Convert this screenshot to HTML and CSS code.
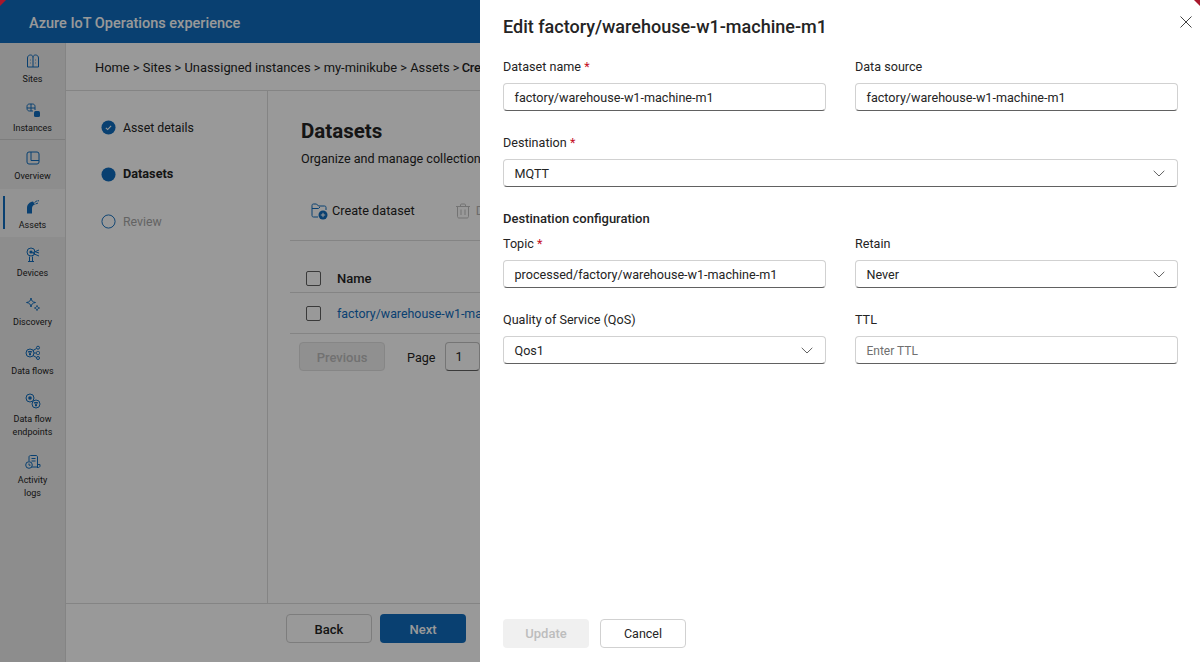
FILE: index.html
```html
<!DOCTYPE html>
<html lang="en">
<head>
<meta charset="utf-8">
<title>Azure IoT Operations experience</title>
<link rel="stylesheet" href="styles.css">
</head>
<body>
<div class="app">
  <header class="topbar">Azure IoT Operations experience</header>
  <div class="shell">
    <nav class="rail">
      <div class="rail-group">
        <a class="rail-item"><svg class="ri" viewBox="0 0 16 16"><path d="M2.500 14V5C2.500 3 4 2 5.500 2S8 3 8 4.500C8 3 9 2 10.500 2S13.500 3 13.500 5V14H2.500ZM8 4.500V14M5 7h.6M10.400 7h.6M5 10h.6M10.400 10h.6"/></svg><span>Sites</span></a>
        <a class="rail-item"><svg class="ri" viewBox="0 0 16 16"><path d="M8 9H4.500C3 9 2 8 2 6.500V4.500C2 3 3 2 4.500 2H7.500C9 2 10 3 10 4.500V8M2 6H10M6 2V9"/><rect class="fill" x="9" y="9" width="6" height="6" rx="1.500"/></svg><span>Instances</span></a>
      </div>
      <div class="rail-group">
        <a class="rail-item"><svg class="ri" viewBox="0 0 16 16"><rect x="2" y="2" width="12" height="12" rx="2"/><path d="M6 2V10.500H14"/></svg><span>Overview</span></a>
        <a class="rail-item active"><svg class="ri" viewBox="0 0 16 16"><path class="fill" d="M2 14.500V9C2 5.500 4.500 3 8 2.500L10 5.500C8 6 7 7.500 7 9.500V14.500Z"/><path d="M9.500 3.500 12 1.800M12.500 1.800H14M10.500 5 13 4"/></svg><span>Assets</span></a>
        <a class="rail-item"><svg class="ri" viewBox="0 0 16 16"><circle cx="6" cy="5" r="4"/><circle class="fill" cx="6" cy="5" r="1.600"/><path d="M4.500 14.500V9.500M7.500 14.500V9.500M3 14.500H9M7 6 14 3M8 6.500 14 9M11 5 14 6"/></svg><span>Devices</span></a>
        <a class="rail-item"><svg class="ri" viewBox="0 0 16 16"><path d="M6 2C6.500 5 7.500 6 10.500 6.500 7.500 7 6.500 8 6 11 5.500 8 4.500 7 1.500 6.500 4.500 6 5.500 5 6 2ZM12 9.500C12.300 11 13 11.700 14.500 12 13 12.300 12.300 13 12 14.500 11.700 13 11 12.300 9.500 12 11 11.700 11.700 11 12 9.500Z"/></svg><span>Discovery</span></a>
        <a class="rail-item"><svg class="ri" viewBox="0 0 16 16"><circle cx="5" cy="8" r="4"/><path d="M3.300 6.500H6.700L5.500 8.200V10H4.500V8.200ZM9 8H11M8 5.500 11.500 3.500M8 10.500 11.500 12.500"/><circle cx="13" cy="2.700" r="1.500"/><rect x="11.500" y="6.500" width="3" height="3" rx="1"/><circle cx="13" cy="13" r="1.500"/></svg><span>Data flows</span></a>
        <a class="rail-item tall"><svg class="ri" viewBox="0 0 16 16"><circle cx="5" cy="5" r="4"/><circle class="fill" cx="5" cy="5" r="1.800"/><circle cx="11" cy="11" r="4"/><path d="M9.300 9.500H12.700L11.500 11.200V13H10.500V11.200Z"/></svg><span>Data flow<br>endpoints</span></a>
        <a class="rail-item tall"><svg class="ri" viewBox="0 0 16 16"><path d="M4 7V3C4 2 4.800 1.500 5.500 1.500H11C12 1.500 12.500 2.200 12.500 3V13H6.500M12.500 10.500H15V12C15 13 14 13.500 13.200 13.500H12M6.500 4.500H10.500M6.500 7H10.500"/><circle cx="4" cy="11" r="3.300"/><path d="M4 9.500V11.200H5.500"/></svg><span>Activity<br>logs</span></a>
      </div>
    </nav>
    <main class="main">
      <div class="crumbs">Home &gt; Sites &gt; Unassigned instances &gt; my-minikube &gt; Assets &gt; <b>Cre</b></div>
      <div class="wizard">
        <ol class="steps">
          <li class="step"><svg class="dot" viewBox="0 0 16 16"><circle class="solid" cx="8" cy="8" r="7.500"/><path class="tick" d="M5.200 8.300 7.100 10.200 10.800 6.300"/></svg>Asset details</li>
          <li class="step current"><svg class="dot" viewBox="0 0 16 16"><circle class="solid" cx="8" cy="8" r="7.500"/></svg>Datasets</li>
          <li class="step todo"><svg class="dot" viewBox="0 0 16 16"><circle class="ring" cx="8" cy="8" r="7"/></svg>Review</li>
        </ol>
        <section class="content">
          <h1>Datasets</h1>
          <p class="lead">Organize and manage collection</p>
          <div class="toolbar">
            <span class="tool"><svg class="ti" viewBox="0 0 18 18"><path d="M8 15H3.500C2.500 15 2 14.400 2 13.500V3.500C2 2.600 2.500 2 3.500 2H6.500L8.500 4H14.500C15.500 4 16 4.600 16 5.500V8M2 6.500H8.500L10 5"/><circle class="fill" cx="13" cy="13" r="4.500"/><path class="plus" d="M13 10.800V15.200M10.800 13H15.200"/></svg>Create dataset</span>
            <span class="tool off"><svg class="ti" viewBox="0 0 18 18"><path d="M2 4.500H16M6.500 4.500V3C6.500 2.400 7 2 7.500 2H10.500C11 2 11.500 2.400 11.500 3V4.500M3.500 4.500V14.500C3.500 15.400 4.200 16 5 16H13C13.800 16 14.500 15.400 14.500 14.500V4.500M7 7.500V13M11 7.500V13"/></svg>D</span>
          </div>
          <div class="row head"><i class="check"></i><b>Name</b></div>
          <div class="row"><i class="check"></i><a class="link">factory/warehouse-w1-ma</a></div>
          <div class="pager"><span class="btn prev">Previous</span><span class="page-label">Page</span><span class="pagebox">1</span></div>
        </section>
      </div>
      <footer class="footer"><span class="btn back">Back</span><span class="btn next">Next</span></footer>
    </main>
  </div>
</div>
<div class="scrim"></div>
<aside class="panel">
  <button class="close" aria-label="Close"><svg viewBox="0 0 12 12"><path d="M.5.5 11.500 11.500M11.500.5 .5 11.500"/></svg></button>
  <h2>Edit factory/warehouse-w1-machine-m1</h2>
  <div class="form">
    <div class="field"><label>Dataset name <em>*</em></label><div class="input">factory/warehouse-w1-machine-m1</div></div>
    <div class="field"><label>Data source</label><div class="input">factory/warehouse-w1-machine-m1</div></div>
    <div class="field wide"><label>Destination <em>*</em></label><div class="input select">MQTT<svg class="chev" viewBox="0 0 12 7"><path d="M.7.8 6 6 11.300.8"/></svg></div></div>
    <h3 class="wide">Destination configuration</h3>
    <div class="field"><label>Topic <em>*</em></label><div class="input">processed/factory/warehouse-w1-machine-m1</div></div>
    <div class="field"><label>Retain</label><div class="input select">Never<svg class="chev" viewBox="0 0 12 7"><path d="M.7.8 6 6 11.300.8"/></svg></div></div>
    <div class="field"><label>Quality of Service (QoS)</label><div class="input select">Qos1<svg class="chev" viewBox="0 0 12 7"><path d="M.7.8 6 6 11.300.8"/></svg></div></div>
    <div class="field"><label>TTL</label><div class="input ph">Enter TTL</div></div>
  </div>
  <div class="actions"><span class="btn update">Update</span><span class="btn cancel">Cancel</span></div>
</aside>
<i class="corner left"></i><i class="corner right"></i>
</body>
</html>
```
FILE: styles.css
```css
* { box-sizing: border-box; }
html, body { margin: 0; height: 100%; overflow: hidden; }
body { font-family: Roboto, "Noto Sans", sans-serif; font-size: 12.600px; color: #242424; background: #fff; }
.app { height: 662px; display: flex; flex-direction: column; }
.topbar { height: 43px; flex: none; background: #0f6cbd; color: #fff; font-weight: 500; font-size: 14.500px; line-height: 47px; padding-left: 29px; }
.shell { flex: 1; display: flex; min-height: 0; }
.rail { width: 66px; flex: none; background: #ebebeb; border-right: 1px solid #dcdcdc; }
.rail-group:first-child { border-bottom: 1px solid #d0d0d0; height: 97px; }
.rail-item { display: flex; flex-direction: column; align-items: center; height: 48.700px; padding-top: 10px; font-size: 9px; line-height: 13px; text-align: center; color: #242424; position: relative; }
.rail-item.tall { height: 61px; }
.rail-item.active { background: #f5f5f5; }
.rail-item.active::before { content: ""; position: absolute; left: 3px; top: 7px; bottom: 8px; width: 2px; background: #0f6cbd; }
.ri { width: 16px; height: 16px; margin-bottom: 4px; flex: none; fill: none; stroke: #0f6cbd; stroke-width: 1; }
.ri .fill { fill: #0f6cbd; stroke: none; }
.main { width: 414px; flex: none; overflow: hidden; display: flex; flex-direction: column; background: #fff; }
.crumbs { height: 48px; flex: none; border-bottom: 1px solid #dcdcdc; padding-left: 29px; font-size: 12.900px; line-height: 49px; white-space: nowrap; overflow: hidden; }
.crumbs b { font-weight: 500; letter-spacing: -.3px; margin-left: -1px; }
.wizard { flex: 1; display: flex; min-height: 0; }
.steps { width: 202px; flex: none; list-style: none; margin: 0; padding: 25px 0 0 35px; border-right: 1px solid #dcdcdc; }
.step { display: flex; align-items: center; gap: 7px; height: 23px; margin-bottom: 24px; white-space: nowrap; font-size: 12.300px; line-height: 24px; }
.step.current { font-weight: 700; font-size: 12.700px; height: 22px; margin-bottom: 25px; line-height: 22px; }
.step.todo { color: #a6a6a6; }
.dot { width: 15px; height: 15px; flex: none; }
.solid { fill: #0f6cbd; }
.ring { fill: none; stroke: #0f6cbd; }
.tick { fill: none; stroke: #fff; stroke-width: 1.200; }
.content { flex: 1; min-width: 0; padding: 24px 0 0 22px; overflow: hidden; white-space: nowrap; }
h1 { margin: 0 0 0 11px; font-size: 20.500px; line-height: 32px; font-weight: 700; color: #242424; }
.lead { margin: 1px 0 0 11px; line-height: 22px; }
.toolbar { display: flex; gap: 39px; margin-top: 30px; height: 41px; padding: 0 0 0 20px; border-bottom: 1px solid #dcdcdc; align-items: flex-start; line-height: 22px; }
.tool { display: flex; align-items: center; gap: 4px; font-size: 12.700px; }
.tool.off { color: #b5b5b5; }
.ti { width: 18px; height: 18px; fill: none; stroke: #0f6cbd; stroke-width: 1; }
.off .ti { stroke: #c0c0c0; }
.ti .fill { fill: #0f6cbd; stroke: none; }
.ti .plus { stroke: #fff; }
.row { display: flex; align-items: center; height: 41px; padding-left: 16px; gap: 16px; border-bottom: 1px solid #dcdcdc; }
.row.head { height: 41px; margin-top: 11px; padding-top: 12px; }
.row b { font-weight: 500; font-size: 13px; }
.check { width: 15px; height: 15px; border: 1px solid #616161; border-radius: 2px; flex: none; }
.link { color: #0f6cbd; font-size: 12.400px; }
.pager { display: flex; align-items: center; margin: 8px 0 0 9px; height: 29px; }
.page-label { margin-left: 22px; padding-top: 1px; }
.pagebox { margin-left: 10px; width: 80px; height: 29px; border: 1px solid #c4c4c4; border-bottom-color: #616161; border-radius: 4px; line-height: 27px; padding-left: 9px; }
.btn { display: inline-flex; align-items: center; justify-content: center; height: 29px; width: 86px; flex: none; border-radius: 4px; font-weight: 500; font-size: 13px; }
.prev { background: #f0f0f0; color: #bdbdbd; border: 1px solid #e0e0e0; padding-top: 1px; }
.footer { height: 59px; flex: none; border-top: 1px solid #dcdcdc; display: flex; gap: 8px; padding: 10px 0 0 220px; }
.back { border: 1px solid #d1d1d1; background: #fff; padding-top: 1px; }
.next { background: #0f6cbd; color: #fff; padding-top: 1px; }
.scrim { position: fixed; inset: 0; background: rgba(0,0,0,.4); }
.panel { position: fixed; top: 0; right: 0; bottom: 0; width: 720px; background: #fff; padding: 0 23px; }
.close { position: absolute; top: 16px; right: 8px; width: 12px; height: 12px; padding: 0; border: 0; background: none; }
.close svg { display: block; width: 12px; height: 12px; fill: none; stroke: #424242; stroke-width: 1; }
h2 { margin: 0; padding-top: 14px; font-size: 18px; line-height: 26px; font-weight: 500; color: #242424; }
.form { display: grid; grid-template-columns: 323px 323px; column-gap: 29px; margin-top: 17px; }
.wide { grid-column: 1 / -1; }
.field { height: 76px; }
.field label { display: block; line-height: 20px; height: 26px; }
em { font-style: normal; color: #c50f1f; }
.input { height: 28px; border: 1px solid #d1d1d1; border-bottom-color: #616161; border-radius: 4px; padding: 0 10.500px; line-height: 27px; position: relative; white-space: nowrap; }
.ph { color: #707070; font-size: 12px; line-height: 28px; }
.chev { position: absolute; right: 12px; top: 10px; width: 12px; height: 7px; fill: none; stroke: #616161; stroke-width: 1; }
h3 { margin: 0 0 6px; font-size: 13px; line-height: 19px; font-weight: 500; }
.actions { position: absolute; left: 23px; bottom: 14px; display: flex; gap: 11px; }
.update { background: #f0f0f0; color: #bdbdbd; }
.cancel { border: 1px solid #d1d1d1; background: #fff; font-weight: 400; font-size: 12.500px; }
.corner { position: fixed; top: 0; width: 6px; height: 6px; background: #a8182c; }
.corner.left { left: 0; clip-path: polygon(0 0, 100% 0, 0 100%); }
.corner.right { right: 0; clip-path: polygon(0 0, 100% 0, 100% 100%); }
```
